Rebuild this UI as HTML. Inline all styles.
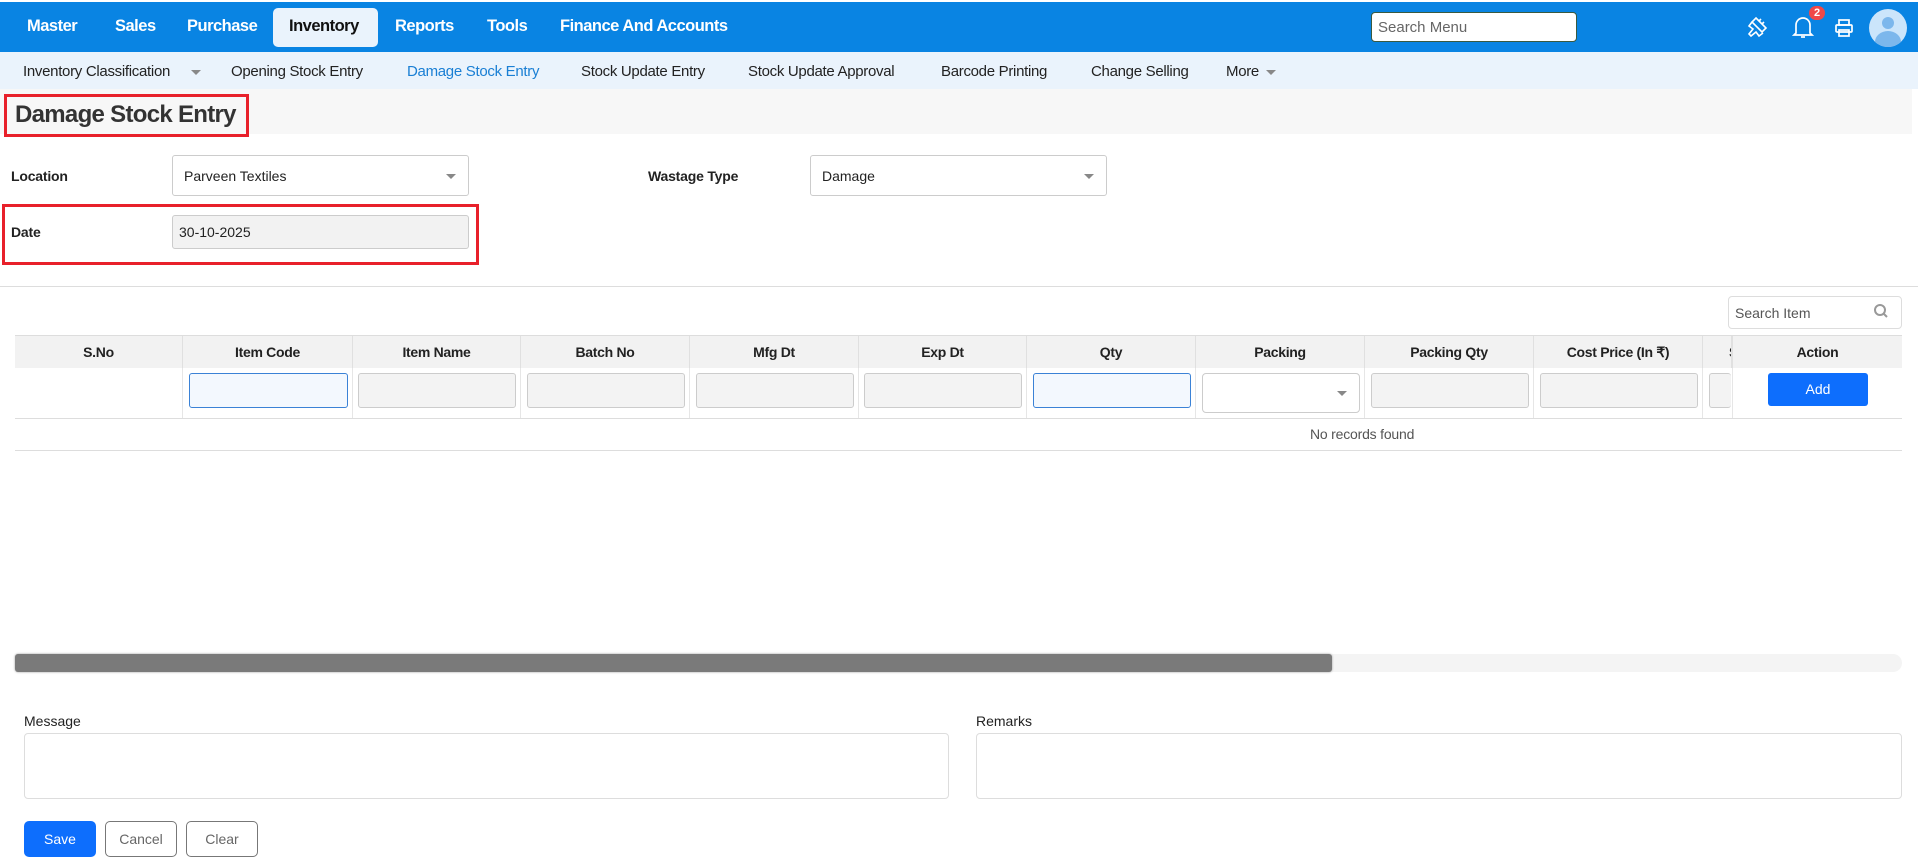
<!DOCTYPE html><html><head><meta charset="utf-8"><style>
*{box-sizing:border-box;margin:0;padding:0}
body{width:1918px;height:850px;overflow:hidden;background:#fff;font-family:"Liberation Sans",sans-serif;position:relative;color:#222}
.a{position:absolute}
.top{left:0;top:2px;width:1918px;height:50px;background:#0984e3}
.nv{top:17px;color:#fff;font-weight:bold;font-size:16.5px;letter-spacing:-.5px}
.sub{left:0;top:52px;width:1918px;height:37px;background:#eaf3fc}
.sn{top:63px;font-size:15px;color:#222;letter-spacing:-.3px}
.lbl{font-size:14px;font-weight:bold;letter-spacing:-.2px}
.inp{border:1px solid #ccc;border-radius:3px;background:#fff;font-size:14px;padding-left:11px;display:flex;align-items:center}
.caret{position:absolute;right:12px;top:50%;margin-top:-2px;border-left:5px solid transparent;border-right:5px solid transparent;border-top:5px solid #888}
.th{top:336px;height:32px;background:#f2f2f2;border-right:1px solid #e0e0e0;font-size:14px;font-weight:bold;display:flex;align-items:center;justify-content:center;letter-spacing:-.3px}
.td{top:368px;height:50px;border-right:1px solid #e6e6e6}
.fi{top:373px;height:35px;border:1px solid #ccc;background:#f3f3f3;border-radius:3px}
</style></head><body>
<div class="a top"></div>
<div class="a" style="left:273px;top:8px;width:105px;height:39px;background:#eaf3fc;border-radius:5px"></div>
<div class="a nv" style="left:27px">Master</div>
<div class="a nv" style="left:115px">Sales</div>
<div class="a nv" style="left:187px">Purchase</div>
<div class="a nv" style="left:289px;color:#111">Inventory</div>
<div class="a nv" style="left:395px">Reports</div>
<div class="a nv" style="left:487px">Tools</div>
<div class="a nv" style="left:560px">Finance And Accounts</div>
<div class="a" style="left:1371px;top:12px;width:206px;height:30px;background:#fff;border:1px solid #3a5a40;border-radius:4px;font-size:15px;color:#666;padding:6px 6px">Search Menu</div>
<svg class="a" style="left:1744px;top:14px" width="26" height="26" viewBox="0 0 26 26" fill="none" stroke="#fff" stroke-width="1.6"><path d="M12 4l10 10-4 4-10-10z"/><path d="M15 7l2-2M18 10l2-2M8 8l-3 4 4 3-4 5 2 2 5-4 3 4 4-3"/></svg>
<svg class="a" style="left:1792px;top:14px" width="22" height="26" viewBox="0 0 22 26" fill="none" stroke="#fff" stroke-width="1.7"><path d="M4 19V11a7 7 0 0 1 14 0v8l2 2H2z"/><path d="M9 23h4"/></svg>
<div class="a" style="left:1809px;top:6px;width:16px;height:14px;border-radius:7px;background:#f04848;color:#fff;font-size:11px;font-weight:bold;text-align:center;line-height:14px">2</div>
<svg class="a" style="left:1834px;top:18px" width="20" height="20" viewBox="0 0 20 20" fill="none" stroke="#fff" stroke-width="1.7"><rect x="5" y="2" width="10" height="5"/><rect x="2" y="7" width="16" height="7" rx="1"/><rect x="5" y="12" width="10" height="6"/></svg>
<svg class="a" style="left:1869px;top:9px" width="38" height="38" viewBox="0 0 38 38"><circle cx="19" cy="19" r="19" fill="#cbe5fb"/><circle cx="19" cy="14" r="6" fill="#7cb7ec"/><path d="M6 33a13 11 0 0 1 26 0a19 19 0 0 1-26 0z" fill="#7cb7ec"/></svg>
<div class="a sub"></div>
<div class="a sn" style="left:23px">Inventory Classification</div>
<div class="a" style="left:191px;top:70px;border-left:5px solid transparent;border-right:5px solid transparent;border-top:5px solid #888"></div>
<div class="a sn" style="left:231px">Opening Stock Entry</div>
<div class="a sn" style="left:407px;color:#1a7fd4">Damage Stock Entry</div>
<div class="a sn" style="left:581px">Stock Update Entry</div>
<div class="a sn" style="left:748px">Stock Update Approval</div>
<div class="a sn" style="left:941px">Barcode Printing</div>
<div class="a sn" style="left:1091px">Change Selling</div>
<div class="a sn" style="left:1226px">More</div>
<div class="a" style="left:1266px;top:70px;border-left:5px solid transparent;border-right:5px solid transparent;border-top:5px solid #888"></div>
<div class="a" style="left:0;top:89px;width:1912px;height:45px;background:#f7f7f7"></div>
<div class="a" style="left:15px;top:101px;font-size:24px;font-weight:bold;color:#333;letter-spacing:-.7px">Damage Stock Entry</div>
<div class="a" style="left:4px;top:94px;width:245px;height:43px;border:3px solid #e8202a"></div>
<div class="a lbl" style="left:11px;top:168px">Location</div>
<div class="a inp" style="left:172px;top:155px;width:297px;height:41px">Parveen Textiles<span class="caret"></span></div>
<div class="a lbl" style="left:648px;top:168px">Wastage Type</div>
<div class="a inp" style="left:810px;top:155px;width:297px;height:41px">Damage<span class="caret"></span></div>
<div class="a lbl" style="left:11px;top:224px">Date</div>
<div class="a inp" style="left:172px;top:215px;width:297px;height:34px;background:#f2f2f2;padding-left:6px">30-10-2025</div>
<div class="a" style="left:2px;top:204px;width:477px;height:61px;border:3px solid #e8202a"></div>
<div class="a" style="left:0;top:286px;width:1918px;height:1px;background:#ddd"></div>
<div class="a" style="left:1728px;top:296px;width:174px;height:33px;border:1px solid #ddd;border-radius:4px;font-size:14px;color:#555;padding:8px 6px">Search Item</div>
<svg class="a" style="left:1873px;top:303px" width="16" height="16" viewBox="0 0 16 16" fill="none" stroke="#999" stroke-width="2"><circle cx="7" cy="7" r="5"/><path d="M11 11l3 3"/></svg>
<div class="a" style="left:15px;top:335px;width:1887px;height:1px;background:#ddd"></div>
<div class="a th" style="left:15px;width:168px">S.No</div>
<div class="a th" style="left:183px;width:170px">Item Code</div>
<div class="a th" style="left:353px;width:168px">Item Name</div>
<div class="a th" style="left:521px;width:169px">Batch No</div>
<div class="a th" style="left:690px;width:169px">Mfg Dt</div>
<div class="a th" style="left:859px;width:168px">Exp Dt</div>
<div class="a th" style="left:1027px;width:169px">Qty</div>
<div class="a th" style="left:1196px;width:169px">Packing</div>
<div class="a th" style="left:1365px;width:169px">Packing Qty</div>
<div class="a th" style="left:1534px;width:169px">Cost Price (In ₹)</div>
<div class="a th" style="left:1703px;width:29px;justify-content:flex-start;padding-left:26px;overflow:hidden">S</div>
<div class="a th" style="left:1732px;width:170px;border-left:1px solid #e0e0e0;border-right:0">Action</div>
<div class="a td" style="left:15px;width:168px"></div>
<div class="a td" style="left:183px;width:170px"></div>
<div class="a td" style="left:353px;width:168px"></div>
<div class="a td" style="left:521px;width:169px"></div>
<div class="a td" style="left:690px;width:169px"></div>
<div class="a td" style="left:859px;width:168px"></div>
<div class="a td" style="left:1027px;width:169px"></div>
<div class="a td" style="left:1196px;width:169px"></div>
<div class="a td" style="left:1365px;width:169px"></div>
<div class="a td" style="left:1534px;width:169px"></div>
<div class="a td" style="left:1732px;width:170px;border-left:1px solid #e6e6e6;border-right:0"></div>
<div class="a fi" style="left:189px;width:159px;background:#f3f8fe;border-color:#3b82d6"></div>
<div class="a fi" style="left:358px;width:158px"></div>
<div class="a fi" style="left:527px;width:158px"></div>
<div class="a fi" style="left:696px;width:158px"></div>
<div class="a fi" style="left:864px;width:158px"></div>
<div class="a fi" style="left:1033px;width:158px;background:#f3f8fe;border-color:#3b82d6"></div>
<div class="a fi" style="left:1202px;width:158px;height:40px;background:#fff;border-radius:4px"><span class="caret"></span></div>
<div class="a fi" style="left:1371px;width:158px"></div>
<div class="a fi" style="left:1540px;width:158px"></div>
<div class="a fi" style="left:1709px;width:22px;border-right:0"></div>
<div class="a" style="left:1768px;top:373px;width:100px;height:33px;background:#0d6efd;border-radius:3px;color:#fff;font-size:14px;text-align:center;line-height:33px">Add</div>
<div class="a" style="left:15px;top:418px;width:1887px;height:1px;background:#ddd"></div>
<div class="a" style="left:1310px;top:426px;font-size:14px;color:#555;letter-spacing:-.2px">No records found</div>
<div class="a" style="left:15px;top:450px;width:1887px;height:1px;background:#ddd"></div>
<div class="a" style="left:15px;top:654px;width:1887px;height:18px;background:#f4f4f4;border-radius:9px"></div>
<div class="a" style="left:15px;top:654px;width:1317px;height:18px;background:#7a7a7a;border-radius:3px;box-shadow:0 0 2px #999"></div>
<div class="a" style="left:24px;top:713px;font-size:14px">Message</div>
<div class="a" style="left:24px;top:733px;width:925px;height:66px;border:1px solid #ddd;border-radius:4px"></div>
<div class="a" style="left:976px;top:713px;font-size:14px">Remarks</div>
<div class="a" style="left:976px;top:733px;width:926px;height:66px;border:1px solid #ddd;border-radius:4px"></div>
<div class="a" style="left:24px;top:821px;width:72px;height:36px;background:#0d6efd;border-radius:5px;color:#fff;font-size:14px;text-align:center;line-height:36px">Save</div>
<div class="a" style="left:105px;top:821px;width:72px;height:36px;border:1px solid #777;border-radius:5px;color:#666;font-size:14px;text-align:center;line-height:34px">Cancel</div>
<div class="a" style="left:186px;top:821px;width:72px;height:36px;border:1px solid #777;border-radius:5px;color:#666;font-size:14px;text-align:center;line-height:34px">Clear</div>
</body></html>
